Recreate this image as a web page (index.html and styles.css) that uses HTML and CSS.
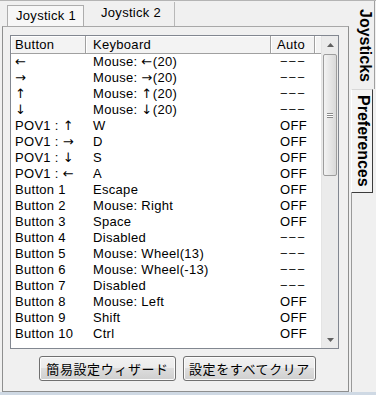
FILE: index.html
```html
<!DOCTYPE html>
<html lang="ja">
<head>
  <meta charset="UTF-8" />
  <title>Joystick settings</title>
  <link rel="stylesheet" href="styles.css">
</head>
<body>
  <div class="window">
    <div class="main">
      <div class="tabs">
        <div class="tab active">Joystick 1</div>
        <div class="tab">Joystick 2</div>
      </div>
      <div class="panel">
        <div class="list">
          <div class="table">
            <div class="head">
              <div class="hcell">Button</div>
              <div class="hcell">Keyboard</div>
              <div class="hcell">Auto</div>
              <div class="hcell blank"></div>
            </div>
            <div class="row"><span><i class="arr">←</i></span><span>Mouse: <i class="arr">←</i>(20)</span><span class="dash">−−−</span></div>
            <div class="row"><span><i class="arr">→</i></span><span>Mouse: <i class="arr">→</i>(20)</span><span class="dash">−−−</span></div>
            <div class="row"><span><i class="arr">↑</i></span><span>Mouse: <i class="arr">↑</i>(20)</span><span class="dash">−−−</span></div>
            <div class="row"><span><i class="arr">↓</i></span><span>Mouse: <i class="arr">↓</i>(20)</span><span class="dash">−−−</span></div>
            <div class="row"><span>POV1 : <i class="arr">↑</i></span><span>W</span><span>OFF</span></div>
            <div class="row"><span>POV1 : <i class="arr">→</i></span><span>D</span><span>OFF</span></div>
            <div class="row"><span>POV1 : <i class="arr">↓</i></span><span>S</span><span>OFF</span></div>
            <div class="row"><span>POV1 : <i class="arr">←</i></span><span>A</span><span>OFF</span></div>
            <div class="row"><span>Button 1</span><span>Escape</span><span>OFF</span></div>
            <div class="row"><span>Button 2</span><span>Mouse: Right</span><span>OFF</span></div>
            <div class="row"><span>Button 3</span><span>Space</span><span>OFF</span></div>
            <div class="row"><span>Button 4</span><span>Disabled</span><span class="dash">−−−</span></div>
            <div class="row"><span>Button 5</span><span>Mouse: Wheel(13)</span><span class="dash">−−−</span></div>
            <div class="row"><span>Button 6</span><span>Mouse: Wheel(-13)</span><span class="dash">−−−</span></div>
            <div class="row"><span>Button 7</span><span>Disabled</span><span class="dash">−−−</span></div>
            <div class="row"><span>Button 8</span><span>Mouse: Left</span><span>OFF</span></div>
            <div class="row"><span>Button 9</span><span>Shift</span><span>OFF</span></div>
            <div class="row"><span>Button 10</span><span>Ctrl</span><span>OFF</span></div>
          </div>
          <div class="scrollbar">
            <div class="arrow">
              <svg width="7" height="4" viewBox="0 0 7 4"><path d="M0 4 L3.5 0 L7 4 Z" fill="#606060"/></svg>
            </div>
            <div class="thumb">
              <div class="grip"></div>
            </div>
            <div class="track"></div>
            <div class="arrow">
              <svg width="7" height="4" viewBox="0 0 7 4"><path d="M0 0 L7 0 L3.5 4 Z" fill="#606060"/></svg>
            </div>
          </div>
        </div>
        <div class="buttons">
          <button class="btn wide">簡易設定ウィザード</button>
          <button class="btn">設定をすべてクリア</button>
        </div>
      </div>
    </div>
    <div class="side">
      <div class="vtab active">Joysticks</div>
      <div class="vtab">Preferences</div>
      <div class="side-rest"></div>
    </div>
  </div>
  <div class="edge"></div>
</body>
</html>
```

FILE: styles.css
```css
body {
  margin: 0;
  width: 376px;
  height: 395px;
  overflow: hidden;
  background-color: #f0f0f0;
  font-family: "Liberation Sans", "Noto Sans CJK JP", sans-serif;
  font-size: 13px;
  color: #000;
}

.window {
  display: flex;
  height: 392px;
  border-top: 1px solid #b4b4b4;
  box-sizing: border-box;
}

.main {
  width: 347px;
  display: flex;
  flex-direction: column;
  padding-left: 2px;
}

.tabs {
  display: flex;
  align-items: flex-end;
  height: 25px;
  padding-left: 5px;
}

.tab {
  height: 24px;
  line-height: 22px;
  padding: 0 13px 0 17px;
  border-right: 1px solid #b8b8b8;
  box-sizing: border-box;
  letter-spacing: 0.3px;
}

.tab.active {
  height: 21px;
  line-height: 20px;
  width: 77px;
  padding: 0 0 0 8px;
  border: 1px solid #adadad;
  border-bottom: none;
  background-color: #f7f7f7;
}

.panel {
  flex: 1;
  border: 1px solid #8e8f8f;
  border-top-color: #a8a8a8;
  padding: 8px 0 0 7px;
  display: flex;
  flex-direction: column;
}

.list {
  width: 329px;
  height: 314px;
  border: 1px solid #828790;
  box-sizing: border-box;
  background-color: #fff;
  display: flex;
}

.table {
  flex: 1;
  overflow: hidden;
}

.head,
.row {
  display: grid;
  grid-template-columns: 75px 185px 44px 1fr;
}

.hcell {
  height: 18px;
  line-height: 17px;
  box-sizing: border-box;
  padding-left: 4px;
  border-right: 1px solid #a0a0a0;
  border-bottom: 1px solid #a0a0a0;
  box-shadow: inset 1px 1px 0 #fff;
  background-color: #f3f3f3;
  letter-spacing: 0.3px;
}

.hcell:nth-child(2) {
  padding-left: 7px;
}

.hcell:nth-child(3) {
  padding-left: 6px;
}

.hcell.blank {
  border-right: none;
}

.row {
  height: 16px;
  line-height: 16px;
  letter-spacing: 0.3px;
  white-space: nowrap;
  overflow: hidden;
}

.row span {
  padding-left: 4px;
}

.row span:nth-child(2) {
  padding-left: 7px;
}

.row span:nth-child(3) {
  padding-left: 9px;
}

.arr {
  font-style: normal;
  font-family: "DejaVu Sans", sans-serif;
  font-size: 13px;
  line-height: 1;
  letter-spacing: 0.5px;
  font-variant-emoji: text;
}

.row span.dash {
  letter-spacing: 1px;
  color: #222;
}

.scrollbar {
  width: 17px;
  display: flex;
  flex-direction: column;
  background-color: #ebebeb;
  border-left: 1px solid #e4e4e4;
  box-sizing: border-box;
}

.arrow {
  height: 17px;
  display: flex;
  align-items: center;
  justify-content: center;
}

.thumb {
  height: 122px;
  margin: 1px 1px 0 1px;
  border: 1px solid #9d9d9d;
  border-radius: 2px;
  background: linear-gradient(to right, #f3f3f3, #e6e6e6 50%, #d9d9d9);
  box-sizing: border-box;
  display: flex;
  align-items: center;
  justify-content: center;
}

.grip {
  width: 6px;
  height: 5px;
  border-top: 1px solid #8a8a8a;
  border-bottom: 1px solid #8a8a8a;
  background: linear-gradient(#fff 0 1px, #8a8a8a 1px 2px, #fff 2px 3px, #8a8a8a 3px 4px, transparent 4px);
  box-sizing: border-box;
}

.track {
  flex: 1;
}

.buttons {
  display: flex;
  gap: 7px;
  padding-left: 29px;
  margin-top: 7px;
}

.btn {
  height: 25px;
  width: 133px;
  font-family: "Noto Sans CJK JP", sans-serif;
  font-size: 13px;
  letter-spacing: 0.6px;
  color: #000;
  border: 1px solid #707070;
  border-radius: 3px;
  background: linear-gradient(#f2f2f2, #ebebeb 50%, #dddddd 50%, #cfcfcf);
  box-shadow: inset 0 0 0 1px #fcfcfc;
  padding: 0;
}

.btn.wide {
  width: 137px;
}

.side {
  flex: 1;
  display: flex;
  flex-direction: column;
}

.vtab {
  writing-mode: vertical-rl;
  font-weight: bold;
  font-size: 16px;
  box-sizing: border-box;
}

.vtab.active {
  height: 88px;
  padding-top: 8px;
  padding-left: 3px;
  border-right: 1px solid #a0a0a0;
  background-color: #f0f0f0;
  margin-right: 1px;
}

.vtab:not(.active) {
  height: 104px;
  margin-left: 2px;
  margin-right: 3px;
  padding-top: 5px;
  padding-left: 2px;
  border: 1px solid #3c3c3c;
  border-left-color: #ffffff;
  border-top-color: #d8d8d8;
  background-color: #f4f4f4;
}

.side-rest {
  flex: 1;
  margin-left: 2px;
  border-left: 1px solid #9a9a9a;
}

.edge {
  height: 3px;
  background-color: #cfd9e4;
}
```
